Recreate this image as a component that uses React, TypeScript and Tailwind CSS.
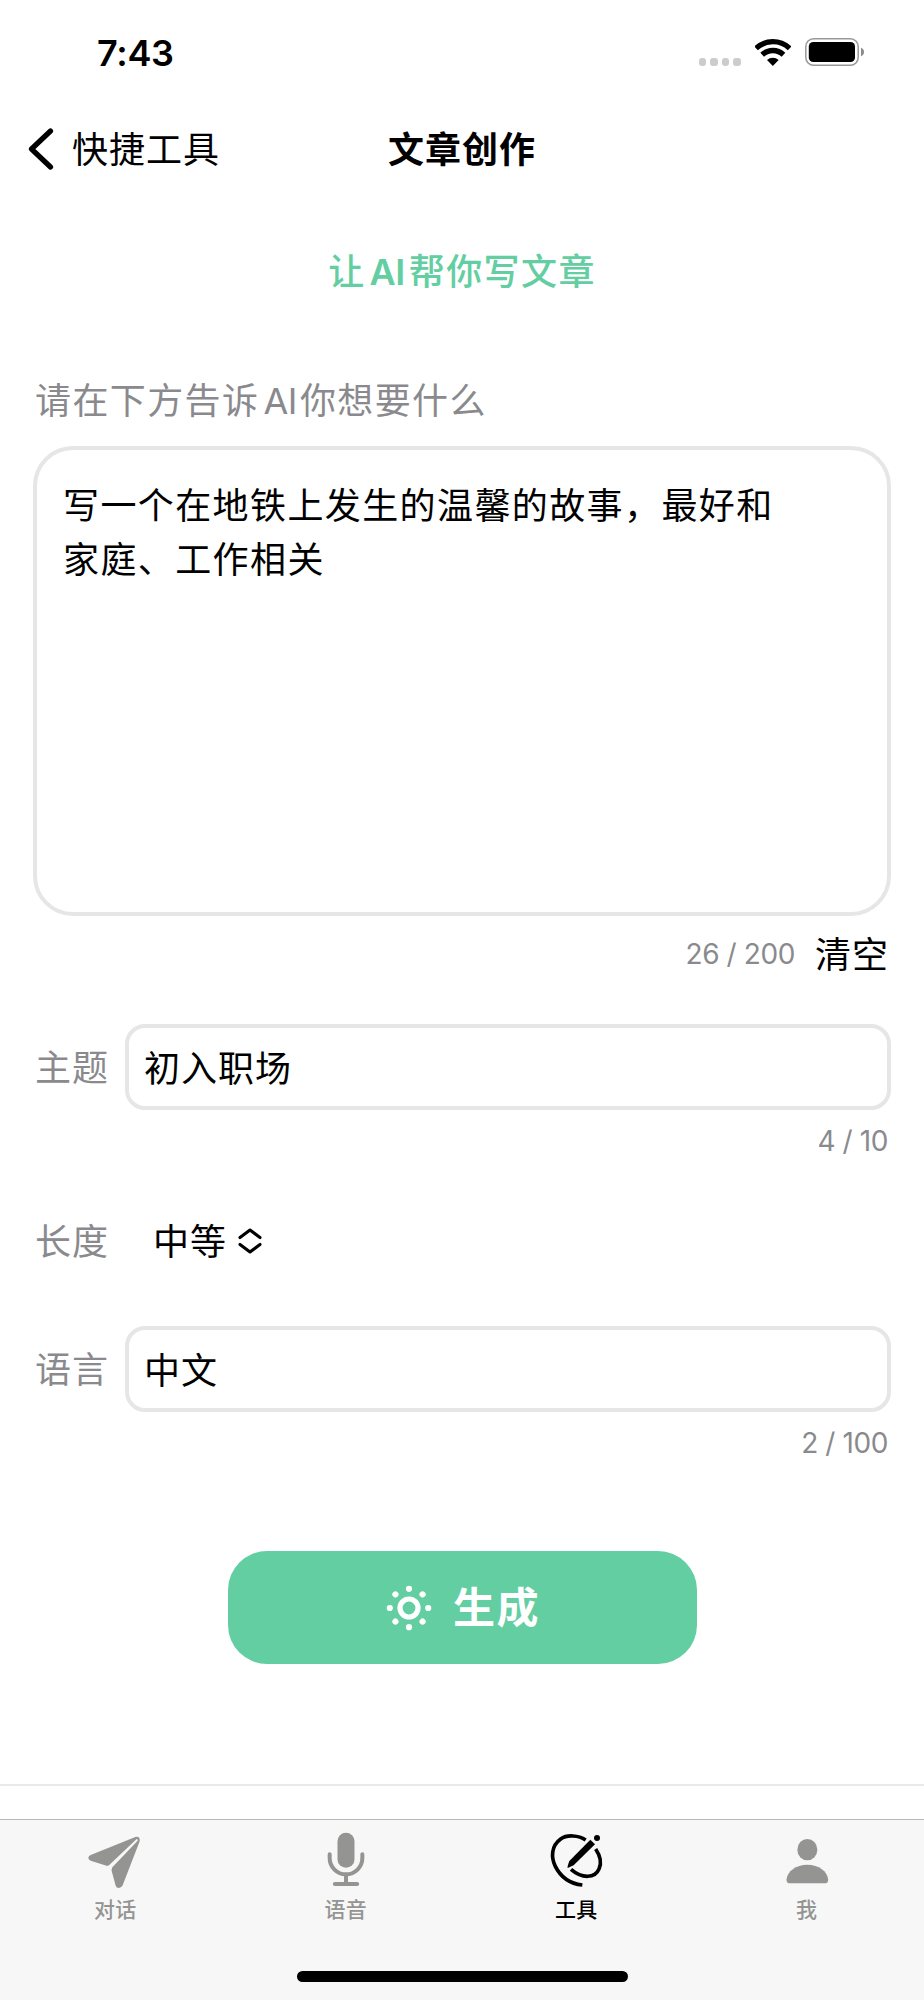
import type { ReactNode } from "react";

const tabs = [
  { label: "对话", icon: <PlaneIcon /> },
  { label: "语音", icon: <MicIcon /> },
  { label: "工具", icon: <PencilIcon />, active: true },
  { label: "我", icon: <PersonIcon /> },
];

function TabSvg({ children }: { children: ReactNode }) {
  return (
    <svg viewBox="-3 0 180 180" className="w-15 h-15" fill="currentColor">
      {children}
    </svg>
  );
}

function PlaneIcon() {
  return (
    <TabSvg>
      <path d="M14 75 L148 21 Q163 18 161 34 L110 166 Q106 174 99 174 Q91 174 89 167 L76 119 L64 108 L14 92 Q7 89 7 83 Q8 77 14 75Z" />
      <path d="M62 109 L69 106 L152 27 Q156 27 155 32 L79 112 L76 121 L70 126Z" fill="#f7f7f7" />
    </TabSvg>
  );
}

function MicIcon() {
  return (
    <TabSvg>
      <rect x="61.5" y="8" width="51" height="105" rx="25.5" />
      <g fill="none" stroke="currentColor" strokeWidth="12" strokeLinecap="round">
        <path d="M38 73 V84 a49 49 0 0 0 98 0 V73" />
        <path d="M87 133 V162" strokeLinecap="butt" />
        <path d="M53.5 162 H120.5" />
      </g>
    </TabSvg>
  );
}

function PencilIcon() {
  return (
    <TabSvg>
      <g fill="none" stroke="currentColor" strokeWidth="11">
        <path d="M116 30 C95 16 60 13 41 27 C12 48 12 82 25 109 C41 141 70 161 106 165" />
        <path d="M146 57 C160 78 164 100 156 117 C144 145 106 147 72 118" />
      </g>
      <path d="M130 29 L144 43 L80 106 L62 114 Q60 112 67 93Z" />
      <circle cx="150" cy="24" r="9" />
    </TabSvg>
  );
}

function PersonIcon() {
  return (
    <TabSvg>
      <ellipse cx="88" cy="59" rx="30" ry="32" />
      <path d="M25.5 149 C27 124 54 104 88 104 S149 124 150.5 149 Q150.5 160 140 160 H36 Q25.5 160 25.5 149Z" />
    </TabSvg>
  );
}

function SunIcon() {
  const angles = [0, 45, 90, 135, 180, 225, 270, 315];
  return (
    <svg viewBox="-23 -23 46 46" className="w-[46px] h-[46px]">
      <circle r="9" fill="none" stroke="white" strokeWidth="5.2" />
      {angles.map((a) => (
        <circle key={a} cx="19.2" r="3.1" fill="white" transform={`rotate(${a})`} />
      ))}
    </svg>
  );
}

function StatusBar() {
  return (
    <div className="flex h-[106px] items-center pl-[97px] pr-[59px]">
      <span className="text-[36px] font-semibold leading-none tracking-[-0.3px]">7:43</span>
      <div className="ml-auto flex items-center">
        <div className="flex gap-1 pt-[18px] mr-[14px]">
          {[0, 1, 2, 3].map((i) => (
            <span key={i} className="w-[7.6px] h-2 rounded-[3px] bg-[#cccccc]" />
          ))}
        </div>
        <svg viewBox="0 0 108 82" className="w-9 h-[27.3px] mr-[14px]">
          <g fill="none" stroke="black" strokeWidth="16">
            <path d="M3.1 28.2 A73 73 0 0 1 103.9 28.2" />
            <path d="M21.5 47.4 A46.5 46.5 0 0 1 85.5 47.4" />
          </g>
          <path d="M53.5 81 L36 63 A26 26 0 0 1 71 63Z" />
        </svg>
        <svg viewBox="0 0 60 28" className="w-[60px] h-7 -mt-px">
          <rect x="0.8" y="0.8" width="52.4" height="26.4" rx="7.8" fill="none" stroke="#999999" strokeWidth="1.5" />
          <rect x="3.8" y="4" width="46.2" height="20" rx="4.5" />
          <path d="M56 9.8 Q59 11 59 14 Q59 17 56 18.2Z" fill="#8c8c8c" />
        </svg>
      </div>
    </div>
  );
}

function NavBar() {
  return (
    <div className="grid grid-cols-[1fr_auto_1fr] h-[86px] items-center pl-7 tracking-[1px]">
      <div className="flex items-center">
        <svg viewBox="0 0 26 42" className="w-[26px] h-[42px]" fill="none" stroke="black" strokeWidth="5.2" strokeLinecap="round" strokeLinejoin="round">
          <path d="M22.5 3 L3.5 21 L22.5 39" />
        </svg>
        <span className="ml-[18px] pt-0.5">快捷工具</span>
      </div>
      <h1 className="pt-0.5 font-semibold -translate-x-[14px]">文章创作</h1>
    </div>
  );
}

function Counter({ text }: { text: string }) {
  return (
    <p className="mt-[11px] h-10 pr-[3px] text-right text-[28px] leading-10 tracking-[-0.4px] text-[#8a8a8e]">
      {text}
    </p>
  );
}

function Field({ label, value }: { label: string; value: string }) {
  return (
    <label className="flex items-center tracking-[1px]">
      <span className="w-[92px] pl-0.5 pt-0.5 shrink-0 text-[#8a8a8e]">{label}</span>
      <input
        defaultValue={value}
        className="w-full h-[86px] px-[15px] pb-0.5 rounded-[20px] border-4 border-[#e6e6e6] outline-none"
      />
    </label>
  );
}

export default function App() {
  return (
    <div className="flex flex-col w-[924px] h-[2000px] bg-white text-black text-[36px] leading-[54px] tracking-[1.4px] font-['Inter','Noto_Sans_CJK_SC',sans-serif]">
      <StatusBar />
      <NavBar />

      <main className="flex flex-col px-[33px]">
        <h2 className="mt-[53px] text-center font-medium text-[#63cea1]">
          让<span className="ml-1 font-semibold tracking-[-0.5px]">AI</span>
          <span className="ml-1">帮你写文章</span>
        </h2>
        <p className="mt-[75px] pl-0.5 text-[#8a8a8e]">
          请在下方告诉<span className="ml-1 mr-[3px] tracking-[-0.5px]">AI</span>你想要什么
        </p>
        <textarea
          defaultValue="写一个在地铁上发生的温馨的故事，最好和家庭、工作相关"
          className="mt-[18px] h-[470px] pl-[26px] pr-[98px] pt-[29px] rounded-[40px] border-4 border-[#e6e6e6] resize-none outline-none"
        />
        <div className="mt-[11px] flex items-center justify-end pr-0.5">
          <span className="pb-0.5 text-[28px] tracking-[-0.4px] text-[#8a8a8e]">26 / 200</span>
          <button className="ml-5 tracking-[1px]">清空</button>
        </div>

        <div className="mt-[41px]">
          <Field label="主题" value="初入职场" />
          <Counter text="4 / 10" />
        </div>

        <div className="mt-[54px] flex items-center">
          <span className="w-[92px] pl-0.5 tracking-[1px] text-[#8a8a8e]">长度</span>
          <button className="ml-7 flex items-center gap-2.5 tracking-[1px]">
            中等
            <svg viewBox="0 0 26 28" className="w-[26px] h-7 -mt-[3px]" fill="none" stroke="black" strokeWidth="3.1" strokeLinecap="round" strokeLinejoin="round">
              <path d="M3 10.5 L13 3 L23 10.5 M3 17.5 L13 25 L23 17.5" />
            </svg>
          </button>
        </div>

        <div className="mt-[57px]">
          <Field label="语言" value="中文" />
          <Counter text="2 / 100" />
        </div>

        <button className="mt-[88px] mx-auto flex w-[469px] h-[113px] items-center justify-center gap-[21px] rounded-[39px] bg-[#63cea1] pl-0.5 text-white text-[42px] font-semibold tracking-[1.4px]">
          <SunIcon />
          生成
        </button>
      </main>

      <div className="mt-[120px] h-0.5 shrink-0 bg-[#e9e9e9]" />

      <nav className="mt-[33px] flex flex-col h-[181px] shrink-0 border-t border-[#b8b8b8] bg-[#f7f7f7]">
        <div className="grid grid-cols-4 pr-0.5">
          {tabs.map((tab) => (
            <div
              key={tab.label}
              className={`flex flex-col items-center pt-2.5 ${tab.active ? "text-black" : "text-[#949593]"}`}
            >
              {tab.icon}
              <span className="mt-1 text-[21px] leading-8 tracking-[0.3px] font-medium">
                {tab.label}
              </span>
            </div>
          ))}
        </div>
        <div className="mt-[45px] mx-auto w-[331px] h-[11px] rounded-full bg-black" />
      </nav>
    </div>
  );
}
